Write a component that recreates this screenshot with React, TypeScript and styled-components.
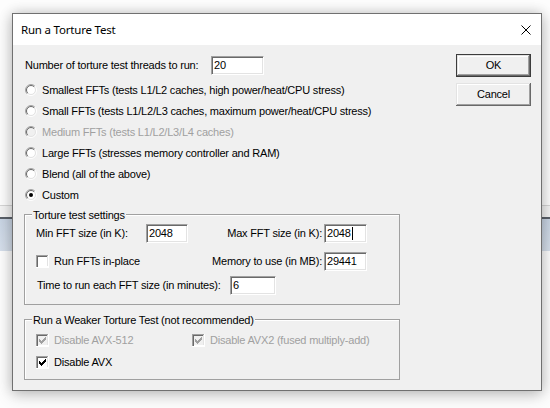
import React from "react";
import styled, { createGlobalStyle } from "styled-components";

const GlobalStyle = createGlobalStyle`
  html, body { margin: 0; padding: 0; background: #ffffff; }
  body { font-family: "Liberation Sans", Arial, sans-serif; }
  *, *::before, *::after { box-sizing: border-box; }
`;

const Desktop = styled.div`
  position: relative;
  width: 550px;
  height: 408px;
  overflow: hidden;
  background: #fdfdfd;
  padding: 13px 0 0 12px;
`;

const BackWindow = styled.div`
  position: absolute;
  left: 0;
  right: 0;
  top: 205px;
  height: 46px;
  border-top: 1px solid #d6d6d6;
  background: linear-gradient(
    to bottom,
    #f4f4f4 0,
    #f4f4f4 11px,
    #5a6069 11px,
    #5a6069 13px,
    #c9d5e4 13px,
    #d6dfeb 100%
  );
`;

const Window = styled.div`
  position: relative;
  width: 530px;
  height: 378px;
  border: 1px solid #707070;
  background: #f0f0f0;
  box-shadow: 0 0 12px rgba(0, 0, 0, 0.2), 0 5px 16px rgba(0, 0, 0, 0.16);
  display: flex;
  flex-direction: column;
`;

const TitleBar = styled.div`
  height: 31px;
  flex: none;
  background: #ffffff;
  display: flex;
  align-items: center;
  justify-content: space-between;
  padding-left: 8px;
`;

const TitleText = styled.span`
  font-family: "Noto Sans", "Open Sans", sans-serif;
  font-size: 11.5px;
  letter-spacing: -0.2px;
  color: #000;
`;

const CloseButton = styled.div`
  width: 30px;
  height: 31px;
  display: flex;
  align-items: center;
  justify-content: center;
`;

const Body = styled.div`
  flex: 1;
  display: flex;
  padding: 0 10px 0 11px;
  font-family: "Liberation Sans", Arial, sans-serif;
  font-size: 11px;
  letter-spacing: -0.2px;
  line-height: 13px;
  color: #000;
`;

const Content = styled.div`
  width: 376px;
  display: flex;
  flex-direction: column;
  padding-top: 11px;
`;

const ButtonColumn = styled.div`
  margin-left: auto;
  padding-top: 9px;
  display: flex;
  flex-direction: column;
  gap: 6px;
`;

const DialogButton = styled.button<{ $default?: boolean }>`
  width: 75px;
  height: 23px;
  padding: 0;
  margin: 0;
  font: inherit;
  letter-spacing: inherit;
  color: #000;
  background: #f0f0f0;
  border: ${(p) => (p.$default ? "1px solid #3c3c3c" : "none")};
  box-shadow: inset -1px -1px 0 #696969, inset 1px 1px 0 #e3e3e3,
    inset -2px -2px 0 #a0a0a0, inset 2px 2px 0 #ffffff;
`;

const ThreadsRow = styled.div`
  height: 19px;
  display: flex;
  align-items: center;
`;

const ThreadsLabel = styled.span`
  width: 187px;
  padding-left: 1px;
`;

const Field = styled.div<{ $w: number }>`
  width: ${(p) => p.$w}px;
  height: 19px;
  flex: none;
  background: #ffffff;
  border-style: solid;
  border-width: 1px;
  border-color: #a0a0a0 #ffffff #ffffff #a0a0a0;
  box-shadow: inset 1px 1px 0 #696969, inset -1px -1px 0 #e3e3e3;
  padding-left: 2px;
  line-height: 17px;
  white-space: nowrap;
  display: flex;
  align-items: center;
`;

const Caret = styled.span`
  display: inline-block;
  width: 1px;
  height: 13px;
  margin-left: 1px;
  background: #000;
`;

const OptionList = styled.div`
  margin-top: 5px;
  display: flex;
  flex-direction: column;
  gap: 1px;
`;

const OptionRow = styled.div<{ $disabled?: boolean }>`
  height: 20px;
  display: flex;
  align-items: center;
  gap: 5px;
  padding-left: 1px;
  color: ${(p) => (p.$disabled ? "#a0a0a0" : "#000")};
  white-space: nowrap;
`;

const GroupBox = styled.div<{ $top: number }>`
  position: relative;
  margin-top: ${(p) => p.$top}px;
  border: 1px solid #a0a0a0;
  box-shadow: inset 1px 1px 0 #ffffff;
`;

const GroupLabel = styled.span`
  position: absolute;
  top: -7px;
  left: 7px;
  padding: 0 1px;
  line-height: 14px;
  background: #f0f0f0;
  white-space: nowrap;
`;

const SettingsBody = styled.div`
  padding: 9px 0 9px 11px;
  display: flex;
  flex-direction: column;
`;

const FieldGrid = styled.div<{ $top?: number }>`
  display: grid;
  grid-template-columns: 110px 42px 136px 43px;
  align-items: center;
  height: 19px;
  margin-top: ${(p) => p.$top ?? 0}px;
`;

const RightLabel = styled.span`
  text-align: right;
  padding-right: 2px;
  white-space: nowrap;
`;

const CheckItem = styled.div<{ $disabled?: boolean; $span?: number; $w?: number }>`
  display: flex;
  align-items: center;
  gap: 5px;
  white-space: nowrap;
  color: ${(p) => (p.$disabled ? "#a0a0a0" : "#000")};
  grid-column: ${(p) => (p.$span ? `span ${p.$span}` : "auto")};
  width: ${(p) => (p.$w ? `${p.$w}px` : "auto")};
`;

const TimeRow = styled.div`
  margin-top: 5px;
  height: 19px;
  display: flex;
  align-items: center;
`;

const TimeLabel = styled.span`
  width: 194px;
  padding-left: 1px;
  white-space: nowrap;
`;

const WeakerBody = styled.div`
  padding: 14px 0 10px 11px;
  display: flex;
  flex-direction: column;
  gap: 9px;
`;

const CheckLine = styled.div`
  height: 13px;
  display: flex;
  align-items: center;
`;

const d = (r: number) => (r * Math.SQRT1_2).toFixed(3);

function Radio({ checked, disabled }: { checked?: boolean; disabled?: boolean }) {
  const ring = (r: number, tl: string, br: string) => {
    const o = d(r);
    const x1 = (6 - +o).toFixed(3);
    const y1 = (6 + +o).toFixed(3);
    const x2 = (6 + +o).toFixed(3);
    const y2 = (6 - +o).toFixed(3);
    return (
      <>
        <path d={`M${x1} ${y1} A${r} ${r} 0 0 1 ${x2} ${y2}`} stroke={tl} fill="none" />
        <path d={`M${x2} ${y2} A${r} ${r} 0 0 1 ${x1} ${y1}`} stroke={br} fill="none" />
      </>
    );
  };
  return (
    <svg width="12" height="12" viewBox="0 0 12 12" style={{ flex: "none" }}>
      <circle cx="6" cy="6" r="4.2" fill={disabled ? "#f0f0f0" : "#ffffff"} />
      {ring(5.5, "#a0a0a0", "#ffffff")}
      {ring(4.5, "#696969", "#e3e3e3")}
      {checked && <circle cx="6" cy="6" r="2" fill="#000" />}
    </svg>
  );
}

const CHECK_TOPS = [2, 3, 4, 3, 2, 1, 0];

function CheckBox({ checked, disabled }: { checked?: boolean; disabled?: boolean }) {
  const mark = disabled ? "#a0a0a0" : "#000000";
  return (
    <svg width="13" height="13" viewBox="0 0 13 13" shapeRendering="crispEdges" style={{ flex: "none" }}>
      <rect x="0" y="0" width="13" height="13" fill="#ffffff" />
      <path d="M0 0h12v1H1v11H0z" fill="#a0a0a0" />
      <path d="M1 1h10v1H2v10H1z" fill="#696969" />
      <path d="M1 11h11V1h-1v10H1z" fill="#e3e3e3" />
      <rect x="2" y="2" width="9" height="9" fill={disabled ? "#f0f0f0" : "#ffffff"} />
      {checked &&
        CHECK_TOPS.map((t, c) => (
          <rect key={c} x={3 + c} y={3 + t} width="1" height="3" fill={mark} />
        ))}
    </svg>
  );
}

const options = [
  { label: "Smallest FFTs (tests L1/L2 caches, high power/heat/CPU stress)" },
  { label: "Small FFTs (tests L1/L2/L3 caches, maximum power/heat/CPU stress)" },
  { label: "Medium FFTs (tests L1/L2/L3/L4 caches)", disabled: true },
  { label: "Large FFTs (stresses memory controller and RAM)" },
  { label: "Blend (all of the above)" },
  { label: "Custom", checked: true },
];

export default function App() {
  return (
    <>
      <GlobalStyle />
      <Desktop>
        <BackWindow />
        <Window>
          <TitleBar>
            <TitleText>Run a Torture Test</TitleText>
            <CloseButton>
              <svg width="10" height="10" viewBox="0 0 10 10">
                <path d="M0.5 0.5L9.5 9.5M9.5 0.5L0.5 9.5" stroke="#000" strokeWidth="1" />
              </svg>
            </CloseButton>
          </TitleBar>
          <Body>
            <Content>
              <ThreadsRow>
                <ThreadsLabel>Number of torture test threads to run:</ThreadsLabel>
                <Field $w={53}>20</Field>
              </ThreadsRow>
              <OptionList>
                {options.map((o) => (
                  <OptionRow key={o.label} $disabled={o.disabled}>
                    <Radio checked={o.checked} disabled={o.disabled} />
                    <span>{o.label}</span>
                  </OptionRow>
                ))}
              </OptionList>

              <GroupBox $top={9}>
                <GroupLabel>Torture test settings</GroupLabel>
                <SettingsBody>
                  <FieldGrid>
                    <span>Min FFT size (in K):</span>
                    <Field $w={42}>2048</Field>
                    <RightLabel>Max FFT size (in K):</RightLabel>
                    <Field $w={43}>
                      2048
                      <Caret />
                    </Field>
                  </FieldGrid>
                  <FieldGrid $top={9}>
                    <CheckItem $span={2}>
                      <CheckBox />
                      <span>Run FFTs in-place</span>
                    </CheckItem>
                    <RightLabel>Memory to use (in MB):</RightLabel>
                    <Field $w={43}>29441</Field>
                  </FieldGrid>
                  <TimeRow>
                    <TimeLabel>Time to run each FFT size (in minutes):</TimeLabel>
                    <Field $w={46}>6</Field>
                  </TimeRow>
                </SettingsBody>
              </GroupBox>

              <GroupBox $top={14}>
                <GroupLabel>Run a Weaker Torture Test (not recommended)</GroupLabel>
                <WeakerBody>
                  <CheckLine>
                    <CheckItem $disabled $w={156}>
                      <CheckBox checked disabled />
                      <span>Disable AVX-512</span>
                    </CheckItem>
                    <CheckItem $disabled>
                      <CheckBox checked disabled />
                      <span>Disable AVX2 (fused multiply-add)</span>
                    </CheckItem>
                  </CheckLine>
                  <CheckLine>
                    <CheckItem>
                      <CheckBox checked />
                      <span>Disable AVX</span>
                    </CheckItem>
                  </CheckLine>
                </WeakerBody>
              </GroupBox>
            </Content>
            <ButtonColumn>
              <DialogButton $default>OK</DialogButton>
              <DialogButton>Cancel</DialogButton>
            </ButtonColumn>
          </Body>
        </Window>
      </Desktop>
    </>
  );
}
